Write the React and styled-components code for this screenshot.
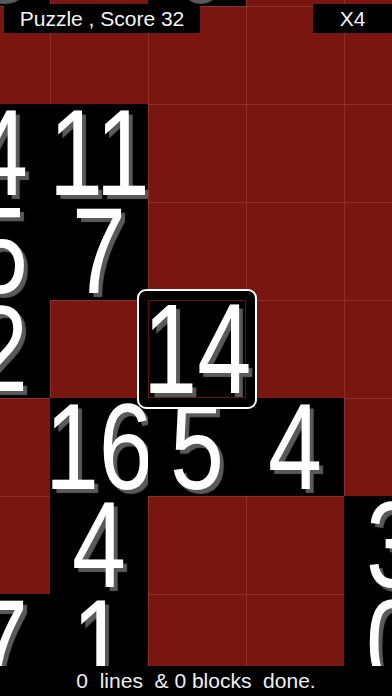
import React from "react";
import styled, { createGlobalStyle, css } from "styled-components";

const Global = createGlobalStyle`
  html, body { margin: 0; padding: 0; background: #000; }
  body { font-family: "Liberation Sans", Arial, sans-serif; }
  * { box-sizing: border-box; }
`;

const Screen = styled.div`
  height: 100vh;
  display: flex;
  flex-direction: column;
  overflow: hidden;
  background: #000;
`;

const Board = styled.div`
  position: relative;
  flex: 1;
  overflow: hidden;
  background: #000;
`;

const Grid = styled.div`
  display: grid;
  grid-template-columns: repeat(5, 98px);
  grid-auto-rows: 98px;
  width: max-content;
  margin: -92px 0 0 -48px;
`;

const Cell = styled.div`
  position: relative;
  display: flex;
  align-items: center;
  justify-content: center;
  overflow: visible;
  background: ${(p) => (p.$filled ? "#000" : "#791610")};
  box-shadow: ${(p) => (p.$filled ? "none" : "inset 1px 1px 0 #8d3027")};
  ${(p) =>
    p.$selected &&
    css`
      z-index: 1;
      &::before {
        content: "";
        position: absolute;
        inset: -11px;
        border: 2px solid #fff;
        border-radius: 9px;
        background: #000;
        z-index: -1;
      }
      &::after {
        content: "";
        position: absolute;
        inset: 0;
        border: 1px solid #5e1410;
        z-index: -1;
      }
    `}
`;

const Num = styled.span`
  display: inline-block;
  color: #fff;
  font-size: ${(p) => (p.$big ? 128 : 122)}px;
  line-height: 98px;
  white-space: nowrap;
  transform: scaleX(${(p) => (p.$big ? 0.76 : 0.795)});
  text-shadow: 5px 4px 1px #5a5a5a;
`;

const TopBar = styled.div`
  position: absolute;
  top: 4px;
  left: 4px;
  right: 0;
  display: flex;
  justify-content: space-between;
  z-index: 2;
`;

const Tag = styled.div`
  width: ${(p) => p.$w}px;
  height: 29px;
  background: #000;
  color: #f4f4f4;
  font-size: 21px;
  line-height: 30px;
  text-align: center;
  white-space: nowrap;
`;

const Footer = styled.div`
  height: 30px;
  flex: none;
  background: #000;
  color: #f0f0f0;
  font-size: 21px;
  line-height: 30px;
  text-align: center;
  white-space: pre;
`;

const rows = [
  ["3", null, "0", null, null],
  [null, null, null, null, null],
  ["4", "11", null, null, null],
  ["5", "7", null, null, null],
  ["2", null, "14", null, null],
  [null, "16", "5", "4", null],
  [null, "4", null, null, "3"],
  ["7", "1", null, null, "0"],
];

const selected = { r: 4, c: 2 };

export default function App() {
  return (
    <>
      <Global />
      <Screen>
        <Board>
          <Grid>
            {rows.map((row, r) =>
              row.map((v, c) => {
                const sel = r === selected.r && c === selected.c;
                return (
                  <Cell key={`${r}-${c}`} $filled={v !== null} $selected={sel}>
                    {v !== null && <Num $big={sel}>{v}</Num>}
                  </Cell>
                );
              })
            )}
          </Grid>
          <TopBar>
            <Tag $w={196}>Puzzle , Score 32</Tag>
            <Tag $w={79}>X4</Tag>
          </TopBar>
        </Board>
        <Footer>{"0  lines  & 0 blocks  done."}</Footer>
      </Screen>
    </>
  );
}
